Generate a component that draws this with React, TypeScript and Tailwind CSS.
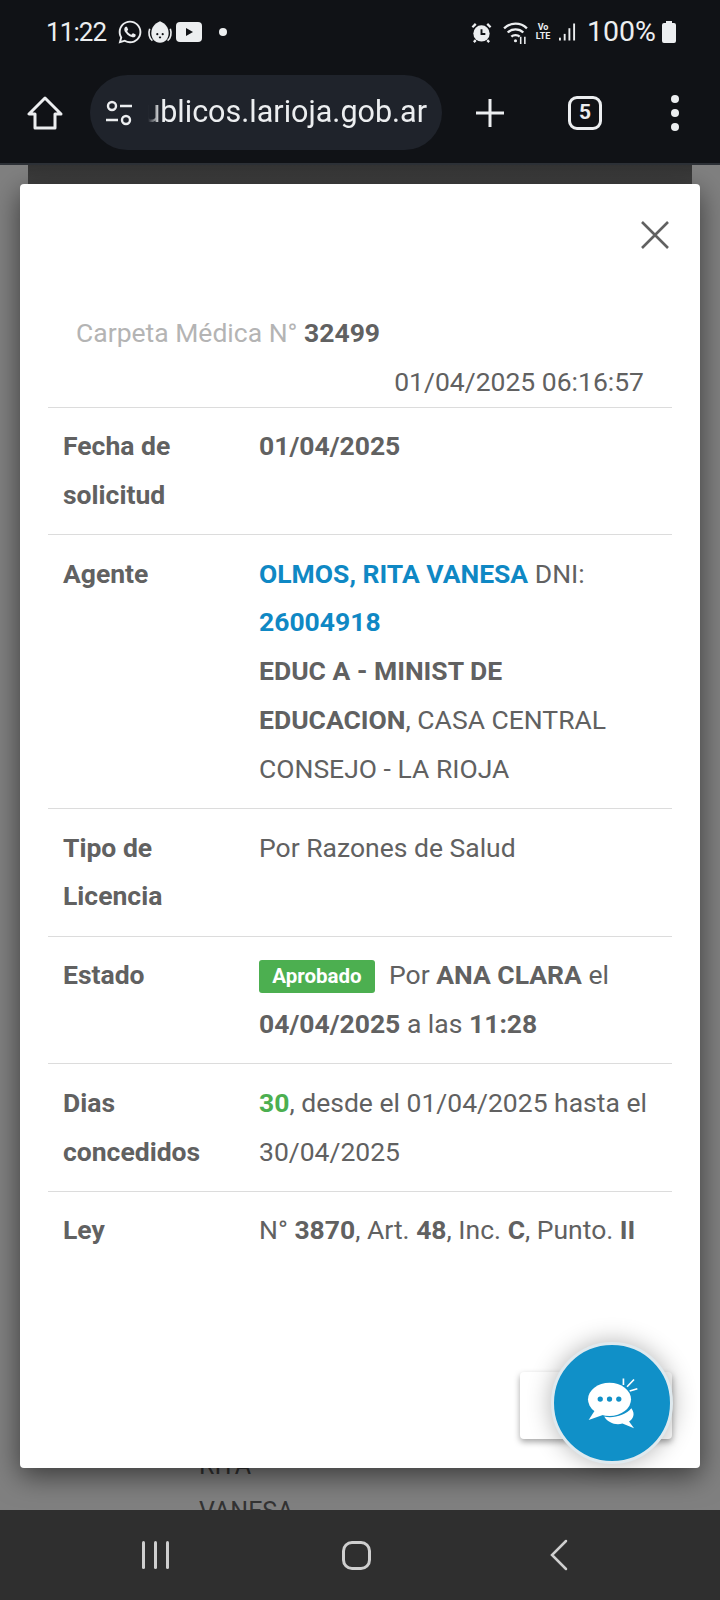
import { ReactNode } from 'react'
import { FaWhatsapp } from 'react-icons/fa'

function Row({ label, children, last = false }: { label: ReactNode; children: ReactNode; last?: boolean }) {
  return (
    <div className={`flex px-[15px] py-[14.5px] ${last ? '' : 'border-b border-[#dcdcdc]'}`}>
      <div className="w-[196px] shrink-0 pr-4 font-bold">{label}</div>
      <div className="flex-1">{children}</div>
    </div>
  )
}

function StatusBar() {
  return (
    <div className="h-[62px] pl-[46px] pr-[44px] pt-[2px] flex items-center text-[#eceef0] font-['Roboto',sans-serif]">
      <span className="text-[26px] w-[71px] tracking-[-0.9px]">11:22</span>
      <FaWhatsapp className="w-[26px] h-[26px]" />
      <svg viewBox="0 0 24 24" className="w-[26px] h-[26px] ml-[4px]" fill="none">
        <path d="M12 2c-5 2-8 6-8 11 0 5 3 9 8 9s8-4 8-9c0-5-3-9-8-11z" fill="#eceef0" />
        <path d="M2.500 9C1 13 2 18 5 20M21.500 9c1.500 4 .5 9-2.500 11" stroke="#eceef0" strokeWidth="1.500" />
        <circle cx="9.500" cy="14" r="1" fill="#101216" />
        <circle cx="14.500" cy="14" r="1" fill="#101216" />
        <path d="M11 17h2" stroke="#101216" strokeWidth="1.500" />
      </svg>
      <svg viewBox="0 0 26 20" className="w-[26px] h-[20px] ml-[3px]">
        <rect width="26" height="20" rx="4" fill="#eceef0" />
        <path d="M10 6l7 4-7 4z" fill="#101216" />
      </svg>
      <span className="w-[8px] h-[8px] rounded-full bg-[#eceef0] ml-[17px]" />
      <div className="ml-auto flex items-center">
        <svg viewBox="0 0 24 24" className="w-[23px] h-[23px]" fill="none">
          <circle cx="12" cy="13" r="8.500" fill="#eceef0" />
          <path d="M12 8.500V13.500H16" stroke="#101216" strokeWidth="2" />
          <path d="M2.500 6.500L6 3M21.500 6.500L18 3M6 20l-2 2M18 20l2 2" stroke="#eceef0" strokeWidth="2.400" />
        </svg>
        <svg viewBox="0 0 26 24" className="w-[27px] h-[25px] ml-[9px]" fill="none" stroke="#eceef0" strokeWidth="2.200">
          <path d="M2 8c6-6 16-6 22 0M5.500 12c4-4 11-4 15 0M9 16c2-2 6-2 8 0" />
          <circle cx="13" cy="20" r="1.500" fill="#eceef0" stroke="none" />
          <path d="M18 16v7M22 23v-7" strokeWidth="1.500" />
        </svg>
        <div className="ml-[6px] w-[16px] flex flex-col text-[9px] leading-[9px] font-bold items-center">
          <span>Vo</span>
          <span>LTE</span>
        </div>
        <svg viewBox="0 0 18 20" className="w-[17px] h-[20px] ml-[8px]" fill="#eceef0">
          <rect x="0" y="16" width="2" height="3" />
          <rect x="5" y="12" width="2" height="7" />
          <rect x="10" y="6" width="2" height="13" />
          <rect x="15" y="1" width="2" height="18" />
        </svg>
        <span className="text-[28.500px] ml-[11px]">100%</span>
        <svg viewBox="0 0 14 22" className="w-[14px] h-[22px] ml-[6px]" fill="#eceef0">
          <path d="M4 0h6v2h2a2 2 0 0 1 2 2v16a2 2 0 0 1-2 2H2a2 2 0 0 1-2-2V4a2 2 0 0 1 2-2h2z" />
        </svg>
      </div>
    </div>
  )
}

function Toolbar() {
  return (
    <div className="h-[103px] flex items-center pl-[27px] text-[#eceef0] font-['Roboto',sans-serif] border-b-2 border-[#2c3036]">
      <svg viewBox="0 0 36 36" className="w-[36px] h-[36px]" fill="none" stroke="#eceef0" strokeWidth="3" strokeLinejoin="round">
        <path d="M18 3L2 19h6v14h20V19h6z" />
      </svg>
      <div className="ml-[27px] w-[352px] h-[75px] rounded-full bg-[#1f232b] flex items-center pl-[14px] pr-[11px]">
        <svg viewBox="0 0 30 30" className="w-[30px] h-[30px]" fill="none" stroke="#eceef0" strokeWidth="2.400">
          <circle cx="8" cy="8" r="4" />
          <path d="M16 8h12M2 22h12" />
          <circle cx="22" cy="22" r="4" />
        </svg>
        <div className="ml-[14px] w-[279px] pb-[2px] overflow-hidden flex justify-end text-[30.500px] [mask-image:linear-gradient(to_right,transparent,black_12px)]">
          <span className="whitespace-nowrap">publicos.larioja.gob.ar</span>
        </div>
      </div>
      <svg viewBox="0 0 32 32" className="w-[32px] h-[32px] ml-[32px]" stroke="#eceef0" strokeWidth="3">
        <path d="M16 2v28M2 16h28" />
      </svg>
      <div className="ml-[62px] w-[34px] h-[34px] rounded-[9px] border-[3px] border-[#eceef0] flex items-center justify-center text-[21px] font-bold leading-none">
        5
      </div>
      <div className="ml-[69px] flex flex-col gap-[6px]">
        <span className="w-[8px] h-[8px] rounded-full bg-[#eceef0]" />
        <span className="w-[8px] h-[8px] rounded-full bg-[#eceef0]" />
        <span className="w-[8px] h-[8px] rounded-full bg-[#eceef0]" />
      </div>
    </div>
  )
}

function ChatBubbles() {
  return (
    <svg viewBox="435 225 160 165" className="w-[53px] h-[55px]">
      <ellipse cx="506" cy="295" rx="65" ry="50" fill="#fff" />
      <path d="M464 325L443 357L490 341z" fill="#fff" />
      <path d="M490 347C518 354 555 342 572 322C585 340 577 354 565 362L580 382L545 368C525 375 500 365 490 347z" fill="#fff" />
      <circle cx="478" cy="294" r="8" fill="#1090c8" />
      <circle cx="506" cy="294" r="8" fill="#1090c8" />
      <circle cx="534" cy="294" r="8" fill="#1090c8" />
      <path d="M548 232v20M580 235l-21 22M590 263l-23 7" stroke="#fff" strokeWidth="5" fill="none" />
    </svg>
  )
}

export default function App() {
  return (
    <div className="w-[720px] h-[1600px] flex flex-col overflow-hidden bg-[#101216] font-['Roboto',sans-serif]">
      <StatusBar />
      <Toolbar />

      <div className="relative flex-1 bg-[#808080] overflow-hidden">
        {/* page behind the modal */}
        <div className="mx-[28px] h-[24px] bg-gradient-to-b from-[#333] to-[#444]" />
        <div className="ml-[199px] mt-[1254px] text-[25px] leading-[46px] text-[#333]">
          <div>RITA</div>
          <div>VANESA</div>
        </div>

        {/* modal */}
        <div className="absolute left-[20px] top-[19px] w-[680px] h-[1284px] bg-white rounded-[4px] shadow-[0_8px_28px_rgba(0,0,0,0.55)] flex flex-col text-[#616161] text-[26.500px] leading-[48.800px]">
          <div className="flex justify-end pt-[37px] pr-[31px] h-[125px]">
            <svg viewBox="0 0 28 28" className="w-[28px] h-[28px]" stroke="#616161" strokeWidth="2.600">
              <path d="M1 1l26 26M27 1L1 27" />
            </svg>
          </div>
          <div className="px-[28px]">
            <div className="pl-[28px] text-[#b4b4b4]">
              Carpeta Médica N° <b className="text-[#616161]">32499</b>
            </div>
            <div className="text-right pr-[28px] border-b border-[#dcdcdc]">01/04/2025 06:16:57</div>

            <Row label={<>Fecha de solicitud</>}>
              <b>01/04/2025</b>
            </Row>
            <Row label="Agente">
              <b className="text-[#0f88c4]">OLMOS, RITA VANESA</b> DNI: <b className="text-[#0f88c4]">26004918</b>
              <br />
              <b>EDUC A - MINIST DE EDUCACION</b>, CASA CENTRAL CONSEJO - LA RIOJA
            </Row>
            <Row label="Tipo de Licencia">Por Razones de Salud</Row>
            <Row label="Estado">
              <span className="inline-block align-[1px] bg-[#4caf50] text-white font-bold text-[20.500px] leading-[33px] w-[116px] text-center rounded-[3px] mr-[14px]">
                Aprobado
              </span>
              Por <b>ANA CLARA</b> el <b>04/04/2025</b> a las <b>11:28</b>
            </Row>
            <Row label="Dias concedidos">
              <b className="text-[#4caf50]">30</b>, desde el 01/04/2025 hasta el 30/04/2025
            </Row>
            <Row label="Ley" last>
              N° <b>3870</b>, Art. <b>48</b>, Inc. <b>C</b>, Punto. <b>II</b>
            </Row>
          </div>

          <div className="mt-auto flex justify-end pr-[28px] pb-[29px]">
            <div className="w-[152px] h-[67px] rounded-[4px] bg-white shadow-[0_3px_6px_rgba(0,0,0,0.35)]" />
          </div>

          {/* chat launcher */}
          <div className="absolute left-[531px] top-[1158px] w-[122px] h-[122px] rounded-full bg-[#1090c8] border-[3px] border-[#dfe9ee] shadow-[0_0_24px_rgba(0,0,0,0.3)] flex items-center justify-center">
            <ChatBubbles />
          </div>
        </div>
      </div>

      <div className="h-[90px] bg-[#2f2f2f] flex items-center shrink-0">
        <div className="ml-[142px] flex gap-[9px]">
          <span className="w-[3px] h-[28px] bg-[#cfcfcf] rounded-full" />
          <span className="w-[3px] h-[28px] bg-[#cfcfcf] rounded-full" />
          <span className="w-[3px] h-[28px] bg-[#cfcfcf] rounded-full" />
        </div>
        <div className="ml-[173px] w-[29px] h-[29px] rounded-[10px] border-[3px] border-[#cfcfcf]" />
        <svg viewBox="0 0 20 32" className="ml-[178px] w-[20px] h-[32px]" fill="none" stroke="#cfcfcf" strokeWidth="2.500" strokeLinecap="round">
          <path d="M17 2L3 16l14 14" />
        </svg>
      </div>
    </div>
  )
}
